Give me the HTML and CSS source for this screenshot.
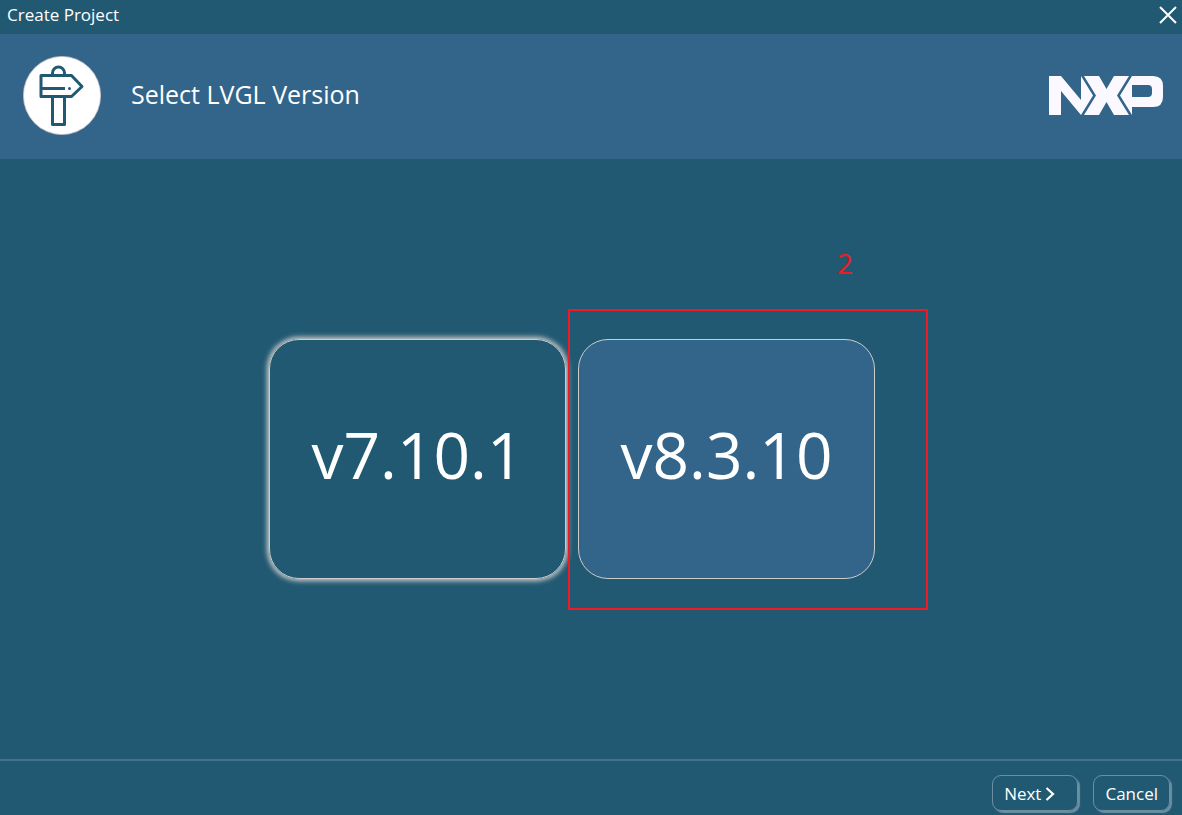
FILE: index.html
```html
<!DOCTYPE html>
<html lang="en">
<head>
<meta charset="utf-8">
<title>Create Project</title>
<link rel="stylesheet" href="styles.css">
</head>
<body>
<div class="dialog">
  <div class="titlebar">
    <span class="titlebar-text">Create Project</span>
    <button class="close" type="button" aria-label="Close">
      <svg width="18" height="18" viewBox="0 0 18 18"><path d="M1 1 17 17M17 1 1 17" stroke="#fff" stroke-width="2" fill="none"/></svg>
    </button>
  </div>
  <header class="header">
    <svg class="badge" width="78" height="79" viewBox="0 0 78 79" aria-hidden="true">
      <ellipse cx="39" cy="39.5" rx="38.6" ry="39.1" fill="#fff" stroke="#c8c4c4" stroke-width="0.8"/>
      <g fill="none" stroke="#225972" stroke-width="3" stroke-linejoin="round">
        <path d="M29.5 19.500V17a6 6 0 0 1 12 0v2.500"/>
        <path d="M18 19.500H48.500L59 30.500 48.500 40.500H18Z"/>
        <path d="M29.500 40.500V68.500H41.500V40.500"/>
        <path d="M18.500 32.500H42"/>
      </g>
      <circle cx="46.500" cy="32.500" r="1.500" fill="#225972"/>
    </svg>
    <h1 class="heading">Select LVGL Version</h1>
    <svg class="logo" width="114" height="39" viewBox="0 0 114 39" role="img" aria-label="NXP">
      <g fill="#fbf9ff">
        <path d="M0 0H12L32 24V0L44 19.500 32 39 12 15V39H0Z"/>
        <path d="M35 0H50L57.500 13 65 0H80L68 19.500 80 39H65L57.500 26 50 39H35L47 19.500Z"/>
        <path d="M83 0H104Q114 0 114 10V21Q114 31 104 31H83V39L71 19.500ZM83 9V21H99Q103 21 103 17V13Q103 9 99 9Z"/>
      </g>
    </svg>
  </header>
  <main class="main">
    <button class="card card-focused" type="button">v7.10.1</button>
    <div class="choice">
      <button class="card card-selected" type="button">v8.3.10</button>
      <div class="callout"><span class="callout-number">2</span></div>
    </div>
  </main>
  <footer class="footer">
    <button class="btn btn-next" type="button">Next
      <svg width="10" height="14" viewBox="0 0 10 14" aria-hidden="true"><path d="M1.500 1 8 7 1.500 13" stroke="#fff" stroke-width="2.200" fill="none"/></svg>
    </button>
    <button class="btn" type="button">Cancel</button>
  </footer>
</div>
</body>
</html>
```
FILE: styles.css
```css
* { box-sizing: border-box; }
body {
  margin: 0;
  background: #225972;
  color: #fff;
  font-family: "Open Sans", "Noto Sans", sans-serif;
}
button {
  font-family: inherit;
  color: inherit;
  background: none;
  border: 0;
  padding: 0;
}
.dialog {
  min-height: 100vh;
  display: flex;
  flex-direction: column;
}
.titlebar {
  height: 34px;
  display: flex;
  justify-content: space-between;
  padding: 0 5px 0 7px;
}
.titlebar-text {
  font-size: 17px;
  line-height: 30px;
}
.close {
  display: flex;
  align-items: center;
  height: 29px;
}
.header {
  height: 125px;
  display: flex;
  align-items: center;
  padding: 0 19px 2px 23px;
  background: #33658a;
}
.heading {
  flex: 1;
  margin: 0 0 4px 30px;
  font-size: 25px;
  line-height: 36px;
  font-weight: 400;
}
.main {
  flex: 1;
  display: flex;
  align-items: center;
  justify-content: center;
  gap: 12px;
  padding-right: 38px;
}
.card {
  display: block;
  width: 297px;
  height: 240px;
  padding-bottom: 8px;
  border: 1px solid #ccc;
  border-radius: 30px;
  font-size: 64px;
  line-height: 88px;
}
.card-focused { box-shadow: 0 0 5px 2px #ccc; }
.card-selected { background: #33658a; }
.choice { position: relative; }
.callout {
  position: absolute;
  inset: -30px -53px -31px -10px;
  border: 2px solid #ed1c24;
  pointer-events: none;
}
.callout-number {
  position: absolute;
  right: 73px;
  bottom: 100%;
  margin-bottom: 30px;
  color: #ed1c24;
  font-size: 28px;
  line-height: 36px;
}
.footer {
  display: flex;
  justify-content: flex-end;
  gap: 15px;
  padding: 14px 12px 4px;
  border-top: 2px solid #43718a;
}
.btn {
  display: flex;
  align-items: center;
  gap: 4px;
  height: 36px;
  padding: 1px 11px 0;
  border: 1px solid #6b8fa2;
  border-radius: 9px;
  box-shadow: 2px 2px 1px #6b8fa2;
  font-size: 17px;
  line-height: 24px;
}
.btn-next { padding-right: 22px; }
```
